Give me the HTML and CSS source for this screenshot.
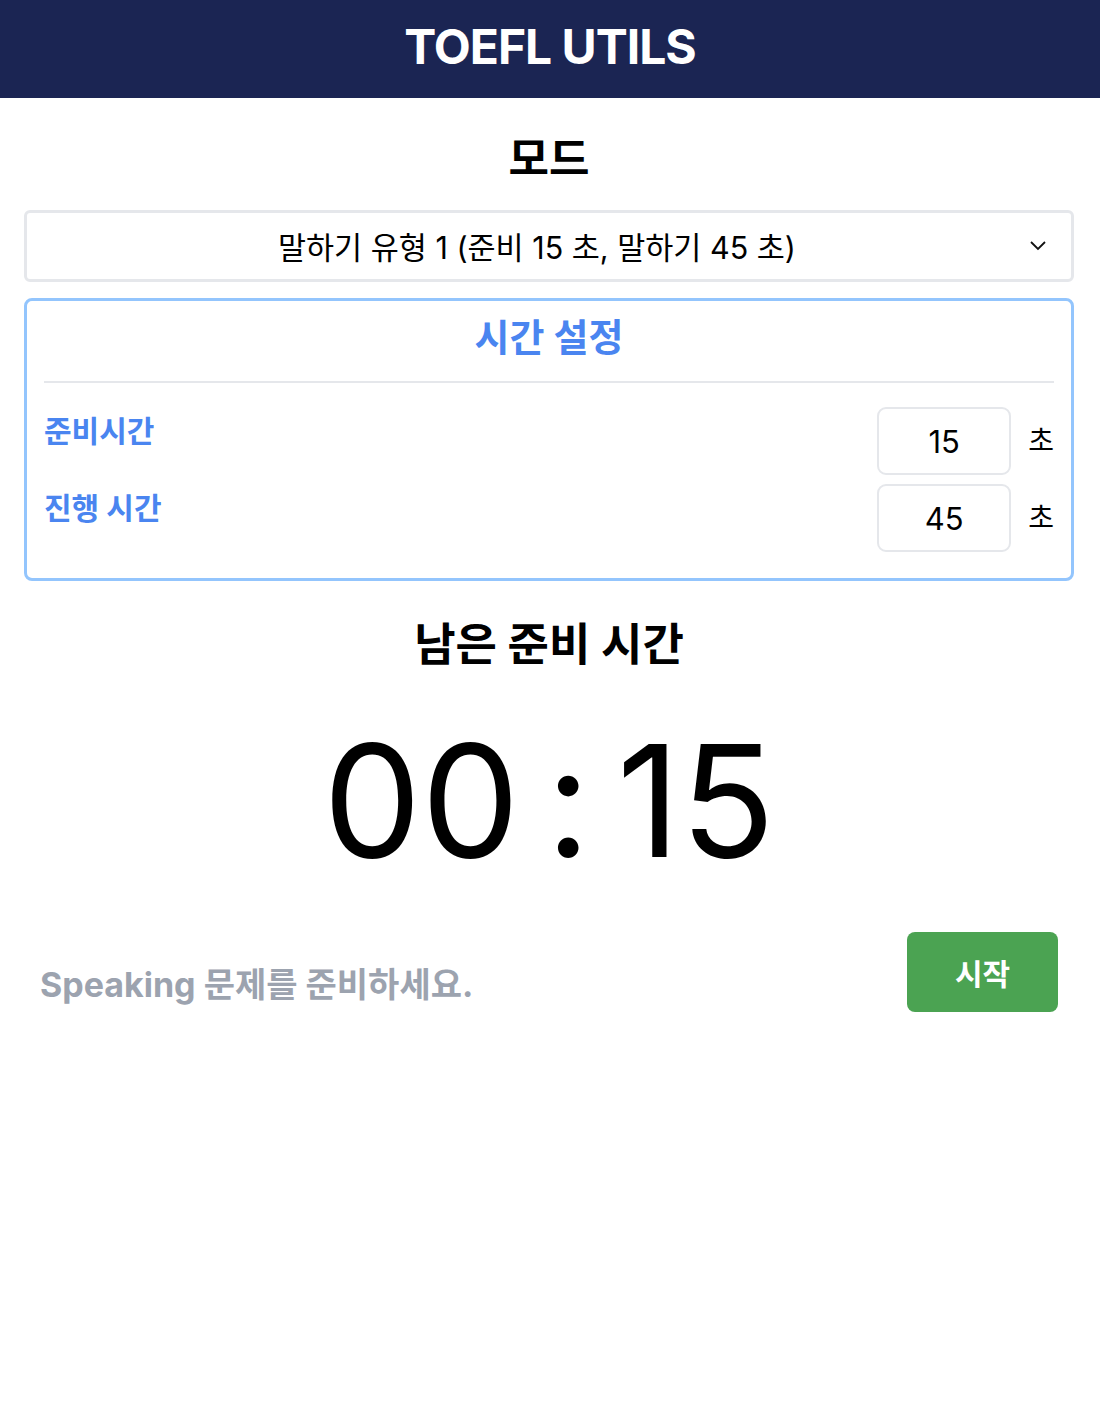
FILE: index.html
```html
<!DOCTYPE html>
<html lang="ko">
<head>
<meta charset="utf-8">
<title>TOEFL UTILS</title>
<link rel="stylesheet" href="styles.css">
</head>
<body>
<header class="topbar"><h1 class="brand">TOEFL UTILS</h1></header>
<main class="page">
  <h2 class="section-title">모드</h2>
  <div class="select">
    <span class="select-text">말하기 유형 1 (준비 15 초, 말하기 45 초)</span>
    <svg class="chev" width="18" height="12" viewBox="0 0 18 12"><path d="M2 2 L9 9 L16 2" fill="none" stroke="#111" stroke-width="1.8"/></svg>
  </div>
  <section class="settings">
    <h3 class="settings-title">시간 설정</h3>
    <hr class="divider">
    <div class="rows">
      <div class="row">
        <span class="label">준비시간</span>
        <div class="field"><span class="num">15</span></div>
        <span class="unit">초</span>
      </div>
      <div class="row">
        <span class="label">진행 시간</span>
        <div class="field"><span class="num">45</span></div>
        <span class="unit">초</span>
      </div>
    </div>
  </section>
  <h2 class="remain">남은 준비 시간</h2>
  <div class="timer"><span>00</span><span class="colon">:</span><span>15</span></div>
  <div class="bottom">
    <p class="hint">Speaking 문제를 준비하세요.</p>
    <button class="start">시작</button>
  </div>
</main>
</body>
</html>
```

FILE: styles.css
```css
* { box-sizing: border-box; }
body {
  margin: 0;
  font-family: "Inter", "Noto Sans CJK KR", sans-serif;
  color: #000;
  background: #fff;
}
.topbar {
  background: #1b2553;
  height: 98px;
  padding-bottom: 6px;
  display: flex;
  align-items: center;
  justify-content: center;
}
.brand {
  margin: 0;
  color: #fff;
  font-size: 48px;
  font-weight: 700;
  letter-spacing: -1px;
}
.page {
  padding: 0 26px 0 24px;
  display: flex;
  flex-direction: column;
}
.section-title {
  margin: 30px 0 0;
  text-align: center;
  font-size: 44px;
  font-weight: 700;
  line-height: 62px;
}
.select {
  margin-top: 20px;
  height: 72px;
  border: 3px solid #e5e7eb;
  border-radius: 6px;
  padding-right: 24px;
  display: flex;
  align-items: center;
  justify-content: center;
  position: relative;
}
.select-text {
  font-size: 30.5px;
}
.chev {
  position: absolute;
  right: 24px;
  top: 27px;
}
.settings {
  margin-top: 16px;
  border: 3px solid #93c5fd;
  border-radius: 8px;
  padding: 11px 17px 26px;
}
.settings-title {
  margin: 0;
  text-align: center;
  color: #4a85f0;
  font-size: 38px;
  font-weight: 700;
  line-height: 50px;
}
.divider {
  margin: 19px 0 24px;
  border: 0;
  border-top: 2px solid #e5e7eb;
}
.rows {
  display: flex;
  flex-direction: column;
  gap: 9px;
}
.row {
  display: flex;
  align-items: center;
}
.label {
  flex: 1;
  align-self: flex-start;
  color: #4a85f0;
  font-size: 30px;
  font-weight: 700;
  line-height: 48px;
}
.field {
  width: 134px;
  height: 68px;
  border: 2px solid #e5e7eb;
  border-radius: 9px;
  display: flex;
  align-items: center;
  justify-content: center;
}
.num { font-size: 31px; }
.unit {
  margin-left: 17px;
  font-size: 28px;
  line-height: 40px;
}
.remain {
  margin: 34px 0 0;
  text-align: center;
  font-size: 45px;
  font-weight: 700;
  line-height: 60px;
}
.timer {
  margin-top: 51px;
  display: flex;
  justify-content: center;
  gap: 26px;
  font-size: 156px;
  font-weight: 400;
  line-height: 150px;
}
.bottom {
  margin-top: 56px;
  display: flex;
  align-items: flex-start;
  justify-content: space-between;
  padding: 0 16px;
}
.hint {
  margin: 32px 0 0;
  color: #9ca3af;
  font-size: 34px;
  font-weight: 700;
  line-height: 42px;
}
.start {
  width: 151px;
  height: 80px;
  border: 0;
  border-radius: 8px;
  background: #4ba352;
  color: #fff;
  font-family: inherit;
  font-size: 30px;
  font-weight: 700;
}
```
